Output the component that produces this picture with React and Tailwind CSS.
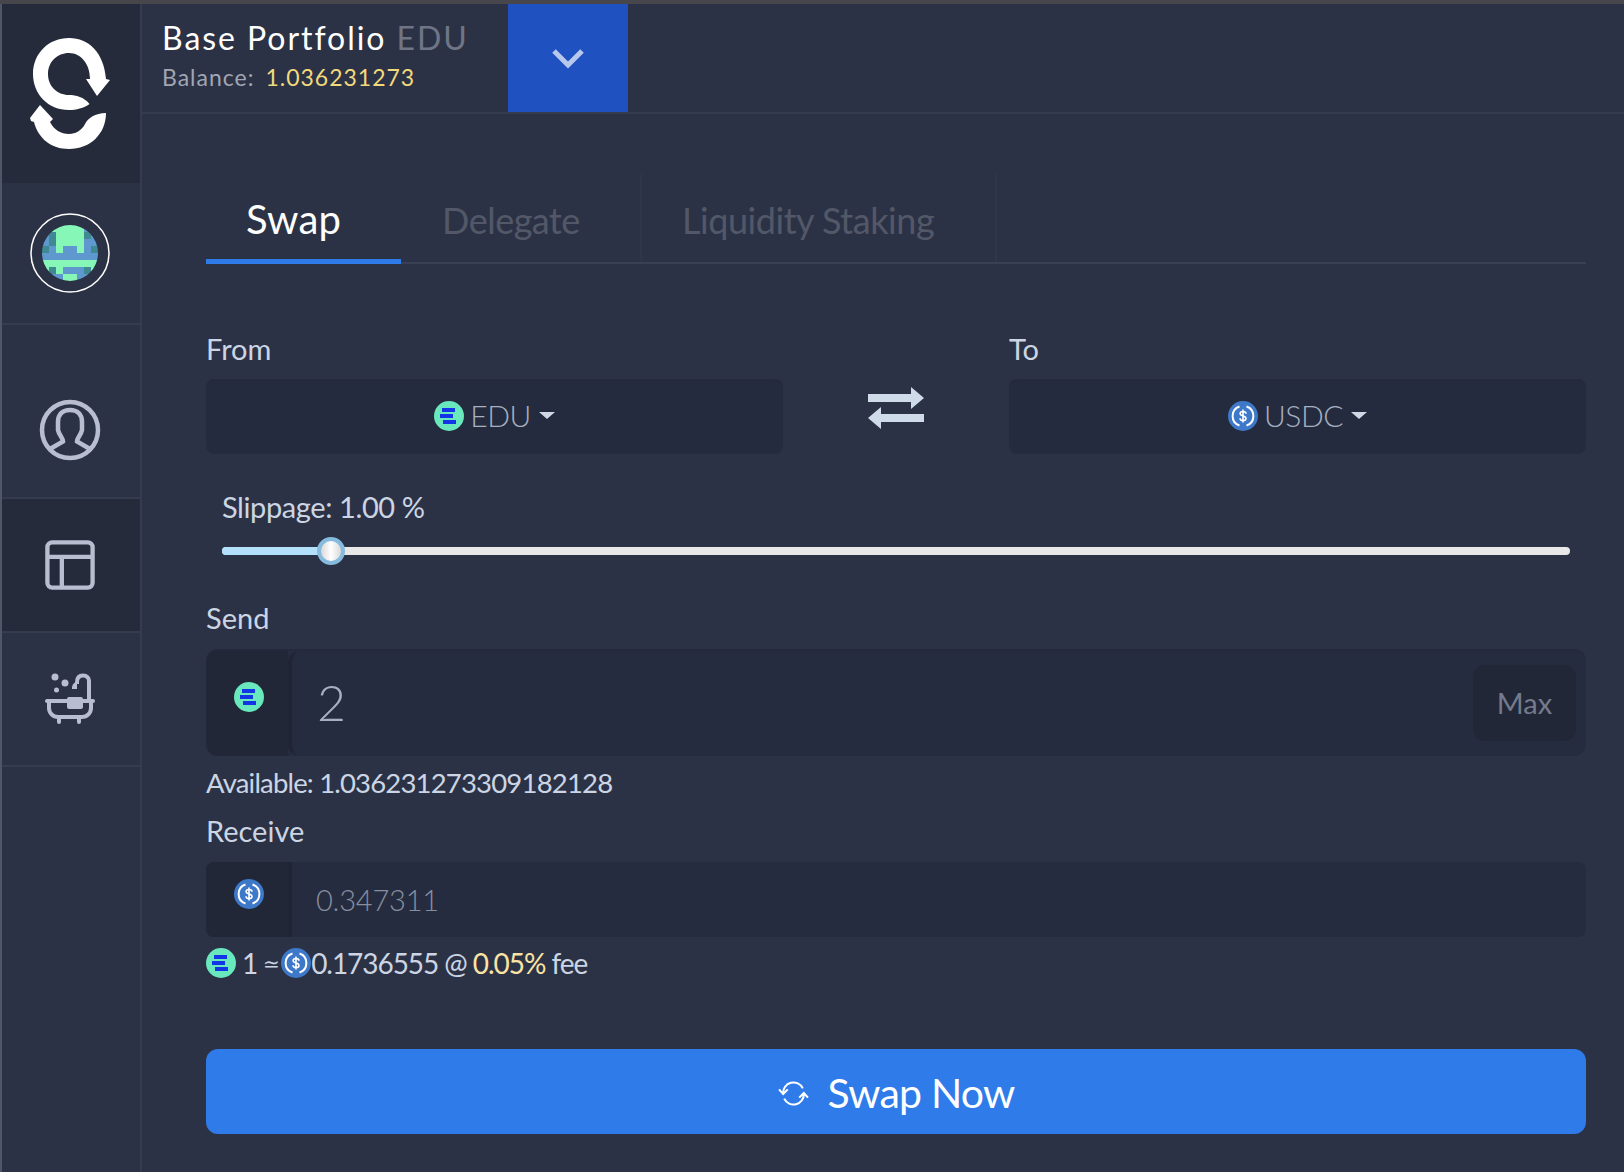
import React from 'react';

const BLUE = '#5f97cf';
const MINT = '#86f7b7';
const TEAL = '#3f8a92';

// avatar pixels, 8x8
const AVATAR = [
  [MINT, MINT, MINT, MINT, MINT, MINT, BLUE, BLUE],
  [BLUE, TEAL, MINT, MINT, MINT, MINT, TEAL, BLUE],
  [BLUE, TEAL, MINT, MINT, MINT, MINT, BLUE, BLUE],
  [TEAL, BLUE, MINT, BLUE, BLUE, MINT, BLUE, TEAL],
  [BLUE, BLUE, BLUE, BLUE, BLUE, BLUE, BLUE, BLUE],
  [MINT, MINT, MINT, MINT, MINT, MINT, MINT, MINT],
  [MINT, TEAL, MINT, BLUE, BLUE, BLUE, TEAL, MINT],
  [BLUE, BLUE, BLUE, MINT, MINT, BLUE, BLUE, BLUE],
];

function Logo() {
  return (
    <svg width="84" height="116" viewBox="28 36 84 116" fill="#fff">
      <path d="M89.5 104C84 108 76 110 69 110C48 110 33 94 33 74C33 53 49 38 69 38C89 38 104 53 106 79L110 80L97 96L86 79L90 79C90 64 81 53 69 53C57 53 48 62 48 74C48 86 57 95 69 95C76 95 84 97 89.5 104Z" />
      <path d="M30 118L40 105L53 119L50 122C54 130 61 134 69 134C76 134 82 130 85 124C88 118 95 113 106 113C106 134 90 149 69 149C51 149 38 138 34 122L31 121Z" />
    </svg>
  );
}

function Avatar() {
  return (
    <svg width="80" height="80" viewBox="0 0 80 80">
      <defs>
        <clipPath id="avatar-clip">
          <circle cx="40" cy="40" r="28" />
        </clipPath>
      </defs>
      <circle cx="40" cy="40" r="39" fill="none" stroke="#fff" strokeWidth="1.5" />
      <g clipPath="url(#avatar-clip)">
        {AVATAR.map((row, y) =>
          row.map((c, x) => <rect key={`${x}-${y}`} x={12 + x * 7} y={12 + y * 7} width="7.2" height="7.2" fill={c} />)
        )}
      </g>
    </svg>
  );
}

function UserIcon() {
  return (
    <svg width="62" height="62" viewBox="0 0 62 62" fill="none" stroke="#b9bdd0" strokeWidth="4.5">
      <circle cx="31" cy="31" r="28" />
      <path d="M11 50L24 42.5C24 39 20 36 19 31V23C19 15 24 11 31 11C38 11 43 15 43 23V31C42 36 38 39 38 42.5L51 50" />
    </svg>
  );
}

function LayoutIcon() {
  return (
    <svg width="50" height="50" viewBox="0 0 52 52" fill="none" stroke="#b9bdd0" strokeWidth="4.5">
      <rect x="2.5" y="2.5" width="47" height="47" rx="5" />
      <path d="M2.5 17.5H49.5M17.5 17.5V49.5" />
    </svg>
  );
}

function BathIcon() {
  return (
    <svg width="52" height="52" viewBox="0 0 52 52" fill="#b9bdd0" stroke="none">
      <circle cx="11" cy="4" r="3.5" />
      <circle cx="21" cy="10" r="3.5" />
      <circle cx="12.500" cy="17" r="2.500" />
      <path d="M28 15C28 11 31 9 33 9V16H28Z" />
      <path d="M33 11V9C33 5 35 2.500 39 2.500C43 2.500 45 5 45 8V27" fill="none" stroke="#b9bdd0" strokeWidth="4" />
      <rect x="1" y="26" width="50" height="4" rx="2" />
      <rect x="23" y="24" width="16" height="12" rx="2" />
      <path d="M5 30V35C5 40 9 44 14 44H38C43 44 47 40 47 35V30" fill="none" stroke="#b9bdd0" strokeWidth="4" />
      <rect x="13" y="43" width="4" height="8" rx="2" />
      <rect x="33" y="43" width="4" height="8" rx="2" />
    </svg>
  );
}

function EduCoin({ size = 30 }) {
  return (
    <svg width={size} height={size} viewBox="0 0 30 30" className="shrink-0">
      <circle cx="15" cy="15" r="15" fill="#68e8bc" />
      <rect x="8" y="7" width="13" height="4" fill="#1434e8" />
      <rect x="6" y="13" width="13" height="4" fill="#1434e8" />
      <rect x="9" y="19" width="13" height="4" fill="#1434e8" />
    </svg>
  );
}

function UsdcCoin({ size = 30 }) {
  return (
    <svg width={size} height={size} viewBox="0 0 30 30" className="shrink-0">
      <circle cx="15" cy="15" r="15" fill="#3e78c8" />
      <path d="M11.500 5.500A10 10 0 0 0 11.500 24.500M18.500 5.500A10 10 0 0 1 18.500 24.500" fill="none" stroke="#fff" strokeWidth="2" />
      <path d="M18 12.800C18 11 16.800 10.500 15 10.500C13.200 10.500 12.100 11.200 12.100 12.600C12.100 15.800 18 14.200 18 17.400C18 18.900 16.800 19.500 15 19.500C13.200 19.500 12 18.900 12 17.200M15 8.500V21.500" fill="none" stroke="#fff" strokeWidth="1.600" />
    </svg>
  );
}

function SyncIcon() {
  return (
    <svg width="31" height="25" viewBox="0 0 30 24" fill="none" stroke="#fff" strokeWidth="2" className="mr-[19px]">
      <path d="M5 12A10 10 0 0 1 24 7M1 8L5 12.500L9.500 8" />
      <path d="M25 12A10 10 0 0 1 6 17M20.500 16L25 11.500L29 16" />
    </svg>
  );
}

function Caret() {
  return <span className="ml-2 w-0 h-0 border-x-[8px] border-x-transparent border-t-[7px] border-t-[#cfd9e6]" />;
}

function TokenSelect({ coin, label }) {
  return (
    <button className="w-full h-[75px] pb-[4px] rounded-lg bg-[#252b3e] border-t-2 border-[#242a3b] flex items-center justify-center">
      {coin}
      <span className="ml-1.5 text-[30px] tracking-[-0.5px] font-light text-[#a5b0c1]">{label}</span>
      <Caret />
    </button>
  );
}

function SideItem({ children, className }) {
  return <div className={`flex items-center justify-center pr-[2px] border-b-2 border-[#363c50] ${className}`}>{children}</div>;
}

export default function App() {
  return (
    <div className="h-screen overflow-hidden bg-[#2c3245] flex flex-col text-[#cbd5e4] [font-family:Lato,sans-serif]">
      <div className="h-1 bg-[#47474b] shrink-0" />
      <div className="flex flex-1 min-h-0">
        {/* Sidebar */}
        <aside className="w-[142px] shrink-0 flex flex-col border-l-2 border-l-[#50566a] border-r-2 border-r-[#363c50]">
          <div className="h-[179px] bg-[#252b3a] flex items-center justify-center pr-[2px]"><Logo /></div>
          <SideItem className="h-[142px]"><Avatar /></SideItem>
          <SideItem className="h-[174px] pt-[37px]"><UserIcon /></SideItem>
          <SideItem className="h-[134px] bg-[#252b3a]"><LayoutIcon /></SideItem>
          <SideItem className="h-[134px]"><BathIcon /></SideItem>
        </aside>

        <div className="flex-1 min-w-0 flex flex-col">
          {/* Header */}
          <header className="h-[110px] shrink-0 flex border-b-2 border-[#363c50]">
            <div className="w-[366px] pl-5 pt-[12px]">
              <div className="text-[32px] leading-[44px] tracking-[1.95px] text-white">
                Base Portfolio <span className="text-[#6f7585]">EDU</span>
              </div>
              <div className="text-[23px] leading-[30px] tracking-[1px] mt-[2px] text-[#a1a6b4]">
                Balance: <span className="ml-1 text-[#f2d97e]">1.036231273</span>
              </div>
            </div>
            <button className="w-[120px] bg-[#1f51c0] flex items-center justify-center pt-[2px]">
              <svg width="34" height="24" viewBox="0 0 34 24" fill="none" stroke="#b8c8ec" strokeWidth="5"><path d="M3 4L17 18L31 4" /></svg>
            </button>
          </header>

          <main className="flex-1 pl-[64px] pr-[38px] pt-[60px]">
            {/* Tabs */}
            <div className="flex h-[90px] border-b-2 border-[#3a4054]">
              <div className="w-[195px] h-[90px] flex items-center pl-[40px] pt-[4px] text-[40px] tracking-[0.1px] text-white border-b-[5px] border-[#2f7bea]">Swap</div>
              <div className="w-[241px] flex items-center pl-[41px] pt-[3px] text-[36px] tracking-[-0.5px] text-[#525868] border-r-2 border-[#30364a]">Delegate</div>
              <div className="w-[355px] flex items-center pl-[40px] pt-[3px] text-[36px] tracking-[-0.45px] text-[#525868] border-r-2 border-[#30364a]">Liquidity Staking</div>
            </div>

            {/* From / To */}
            <div className="flex items-end mt-[68px]">
              <div className="flex-1">
                <div className="text-[29px] leading-[36px] mb-[12px] mt-[-1px]">From</div>
                <TokenSelect coin={<EduCoin />} label="EDU" />
              </div>
              <div className="w-[226px] h-[75px] flex items-start justify-center pt-[8px]">
                <svg width="56" height="42" viewBox="0 0 56 42" fill="#cfdbe8">
                  <path d="M0 7H43V0L56 11L43 22V15H0Z" />
                  <path d="M56 27H13V20L0 31L13 42V35H56Z" />
                </svg>
              </div>
              <div className="flex-1">
                <div className="text-[29px] leading-[36px] mb-[12px] mt-[-1px]">To</div>
                <TokenSelect coin={<UsdcCoin />} label="USDC" />
              </div>
            </div>

            {/* Slippage */}
            <div className="px-4 mt-[33px]">
              <div className="text-[29px] leading-[40px] tracking-[-0.4px]">Slippage: 1.00 %</div>
              <div className="relative h-2 mt-[20px] rounded-full bg-[#e8e8e8]">
                <div className="h-2 w-[109px] rounded-l-full bg-[#b3e1fb]" />
                <div className="absolute left-[95px] top-[-10px] w-[28px] h-[28px] rounded-full bg-linear-to-r from-[#d9d9da] via-white to-[#d9d9da] border-[4px] border-[#86bbdd]" />
              </div>
            </div>

            {/* Send */}
            <div className="text-[29px] leading-[36px] mt-[45px]">Send</div>
            <div className="flex h-[107px] mt-[13px] rounded-xl bg-[#262c3f] border-t-2 border-[#242a3b]">
              <div className="w-[82px] shrink-0 rounded-l-xl bg-[#222737] flex justify-center pl-[3px] pt-[31px]"><EduCoin /></div>
              <div className="flex-1 rounded-l-xl border-l-4 border-[#202536] flex items-center justify-between pl-[25px] pr-[10px] pb-[2px]">
                <span className="text-[50px] font-light text-[#a5b0c1]">2</span>
                <button className="w-[103px] h-[76px] rounded-xl bg-[#222737] text-[29px] text-[#757b8c]">Max</button>
              </div>
            </div>
            <div className="text-[27.500px] leading-[36px] tracking-[-0.82px] mt-[9px]">Available: 1.036231273309182128</div>

            {/* Receive */}
            <div className="text-[29px] leading-[36px] mt-[12px]">Receive</div>
            <div className="flex h-[75px] mt-[13px] rounded-lg bg-[#262c3f]">
              <div className="w-[86px] shrink-0 rounded-l-lg bg-[#222737] flex justify-center pl-[3px] pt-[17px] border-r-4 border-[#202536]"><UsdcCoin /></div>
              <div className="flex-1 flex items-center pl-[24px] text-[29px] tracking-[-0.2px] font-light text-[#868f9f]">0.347311</div>
            </div>
            <div className="flex items-center text-[28px] leading-[36px] mt-[8px] tracking-[-1.05px]">
              <EduCoin />
              <span className="ml-[6px]">1</span>
              <span className="ml-[6px] mr-[2px] text-[20px]">≃</span>
              <UsdcCoin />
              <span>0.1736555 @&nbsp;</span>
              <span className="text-[#fbe3a4]">0.05%</span>
              <span>&nbsp;fee</span>
            </div>

            <button className="w-full h-[85px] mt-[68px] pt-[3px] rounded-xl bg-[#2f7bea] flex items-center justify-center text-white text-[41px] tracking-[-0.8px]">
              <SyncIcon />
              Swap Now
            </button>
          </main>
        </div>
      </div>
    </div>
  );
}
